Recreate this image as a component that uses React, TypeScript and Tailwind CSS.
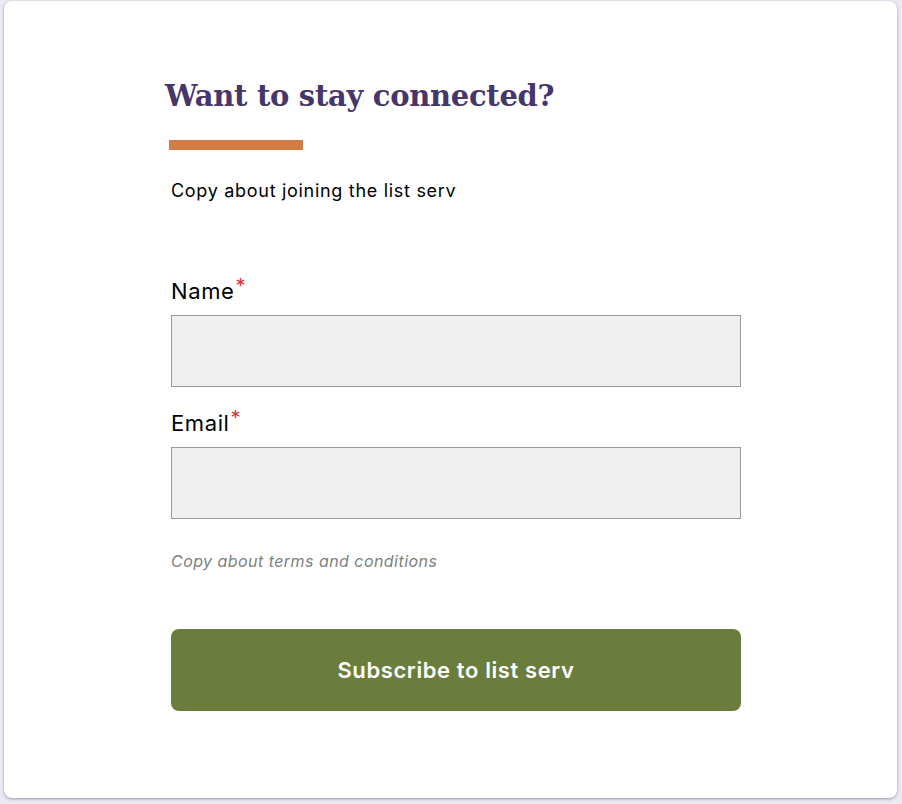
export default function App() {
  return (
    <div className="min-h-screen bg-[#ebe9f2] pt-px pb-[6px] pl-1 pr-[5px]">
      <div className="h-[797px] rounded-lg bg-white shadow-[0_1px_3px_rgba(60,50,90,0.45)] pl-[167px] pt-[73px] font-['Inter',sans-serif]">
        <div className="w-[570px]">
          <h2 className="-ml-[6px] font-['DejaVu_Serif',serif] text-[29px] font-bold leading-[44px] text-[#46366a] tracking-[-0.3px]">
            Want to stay connected?
          </h2>
          <div className="mt-[22px] -ml-[2px] h-[10px] w-[134px] bg-[#d27d46]" />
          <p className="mt-[29px] text-[18px] leading-[24px] tracking-[0.7px] text-black">Copy about joining the list serv</p>

          <form className="mt-[73px] flex flex-col">
            <label className="text-[22px] leading-[30px] tracking-[0.6px] text-black">
              Name<span className="relative -top-[6px] ml-px text-[20px] text-[#e0332f]">*</span>
            </label>
            <input className="mt-[8px] h-[72px] w-full border border-[#9a9a9a] bg-[#f0f0f0]" />

            <label className="mt-[21px] text-[22px] leading-[30px] tracking-[0.6px] text-black">
              Email<span className="relative -top-[6px] ml-px text-[20px] text-[#e0332f]">*</span>
            </label>
            <input className="mt-[8px] h-[72px] w-full border border-[#9a9a9a] bg-[#f0f0f0]" />

            <p className="mt-[31px] text-[16px] italic leading-[22px] tracking-[0.45px] text-[#808080]">Copy about terms and conditions</p>

            <button
              type="button"
              className="mt-[57px] h-[82px] w-full rounded-lg bg-[#6a7d3d] text-[22px] font-semibold tracking-[0.6px] text-white"
            >
              Subscribe to list serv
            </button>
          </form>
        </div>
      </div>
    </div>
  );
}
